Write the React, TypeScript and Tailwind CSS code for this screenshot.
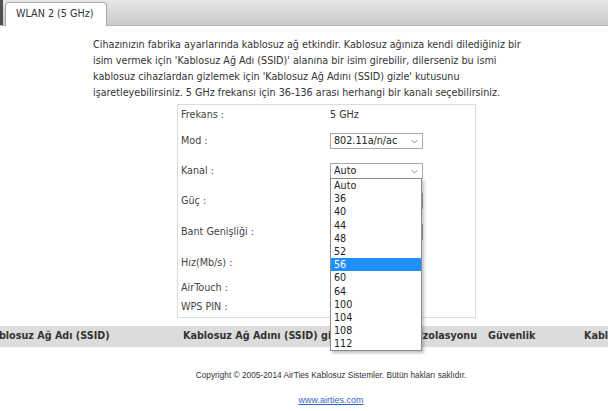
import React from "react";

const labels: { text: string; h: string }[] = [
  { text: "Frekans :", h: "h-[20px]" },
  { text: "Mod :", h: "h-[32px]" },
  { text: "Kanal :", h: "h-[28px]" },
  { text: "Güç :", h: "h-[32px]" },
  { text: "Bant Genişliği :", h: "h-[30px]" },
  { text: "Hız(Mb/s) :", h: "h-[32px]" },
  { text: "AirTouch :", h: "h-[18px]" },
  { text: "WPS PIN :", h: "h-[20px]" },
];

const options = ["Auto", "36", "40", "44", "48", "52", "56", "60", "64", "100", "104", "108", "112"];

function FakeSelect({ value, w = "w-[93px]" }: { value: string; w?: string }) {
  return (
    <div className={`${w} h-[16px] border border-[#a9a9a9] bg-white flex items-center justify-between pl-[3px] pr-[4px] text-[#222]`}>
      <span className="leading-none">{value}</span>
      <svg width="7" height="5" viewBox="0 0 7 5" className="mt-[1px]">
        <path d="M0.5 1 L3.5 4 L6.5 1" fill="none" stroke="#888" strokeWidth="1" />
      </svg>
    </div>
  );
}

export default function App() {
  const font = { fontFamily: "Tahoma, 'DejaVu Sans Condensed', 'DejaVu Sans', sans-serif" };
  return (
    <div className="relative w-[608px] h-[411px] overflow-hidden bg-white" style={font}>
      {/* tab bar */}
      <div className="h-[26px] flex items-end bg-gradient-to-b from-[#e6e6e6] to-[#cbcbcb] border-b border-[#b4b4b4]">
        <div className="w-[3px] h-[25px] bg-[#505050]" />
        <div className="ml-[2px] w-[102px] h-[24px] -mb-px bg-white border border-b-0 border-[#a8a8a8] rounded-t-[4px] flex items-center pl-[10px] text-[10.7px] text-[#333]">
          WLAN 2 (5 GHz)
        </div>
      </div>

      {/* paragraph */}
      <p className="ml-[93px] mt-[11px] w-[480px] text-[10.7px] leading-[16px] text-[#333]">
        Cihazınızın fabrika ayarlarında kablosuz ağ etkindir. Kablosuz ağınıza kendi dilediğiniz bir
        <br />
        isim vermek için 'Kablosuz Ağ Adı (SSID)' alanına bir isim girebilir, dilerseniz bu ismi
        <br />
        kablosuz cihazlardan gizlemek için 'Kablosuz Ağ Adını (SSID) gizle' kutusunu
        <br />
        işaretleyebilirsiniz. 5 GHz frekansı için 36-136 arası herhangi bir kanalı seçebilirsiniz.
      </p>

      {/* form box */}
      <div className="ml-[177px] mt-[3px] w-[299px] border border-[#dcdcdc] text-[10.7px] text-[#444]">
        {labels.map((l, i) => (
          <div key={i} className={`${l.h} flex items-center`}>
            <div className="w-[152px] pl-[3px]">{l.text}</div>
            <div className="flex items-center">
              {i === 0 && <span className="text-[#333]">5 GHz</span>}
              {i === 1 && <FakeSelect value="802.11a/n/ac" />}
              {i === 2 && <FakeSelect value="Auto" />}
              {i === 3 && <FakeSelect value="Otomatik" />}
              {i === 4 && <FakeSelect value="80 MHz" />}
            </div>
          </div>
        ))}
      </div>

      {/* table header */}
      <div className="mt-[8px] h-[21px] bg-[#dcdcdc] flex items-center text-[10.7px] font-bold text-[#333] whitespace-nowrap overflow-hidden">
        <div className="-ml-[15px] w-[198px] shrink-0">Kablosuz Ağ Adı (SSID)</div>
        <div className="w-[180px] shrink-0">Kablosuz Ağ Adını (SSID) gizle</div>
        <div className="w-[125px] shrink-0 text-right pr-[11px]">İzolasyonu</div>
        <div className="w-[96px] shrink-0">Güvenlik</div>
        <div className="shrink-0">Kablosuz Ağ</div>
      </div>

      {/* footer */}
      <div className="ml-[54px] w-[554px] flex flex-col items-center" style={{ fontFamily: "'Liberation Sans', Arial, sans-serif" }}>
        <div className="mt-[23px] text-[8.3px] leading-[10px] text-[#333]">
          Copyright © 2005-2014 AirTies Kablosuz Sistemler. Bütün hakları saklıdır.
        </div>
        <a className="mt-[15px] text-[9px] leading-[10px] text-[#3366cc] underline">www.airties.com</a>
      </div>

      {/* open dropdown list */}
      <div className="absolute left-[330px] top-[178px] w-[92px] bg-white border border-[#8c8c8c] shadow-[2px_2px_3px_rgba(0,0,0,0.25)] text-[10.7px] text-[#222]">
        {options.map((o) => (
          <div
            key={o}
            className={`h-[13.2px] leading-[13.2px] pl-[3px] ${o === "56" ? "bg-[#1e90ff] text-white" : ""}`}
          >
            {o}
          </div>
        ))}
      </div>
    </div>
  );
}
